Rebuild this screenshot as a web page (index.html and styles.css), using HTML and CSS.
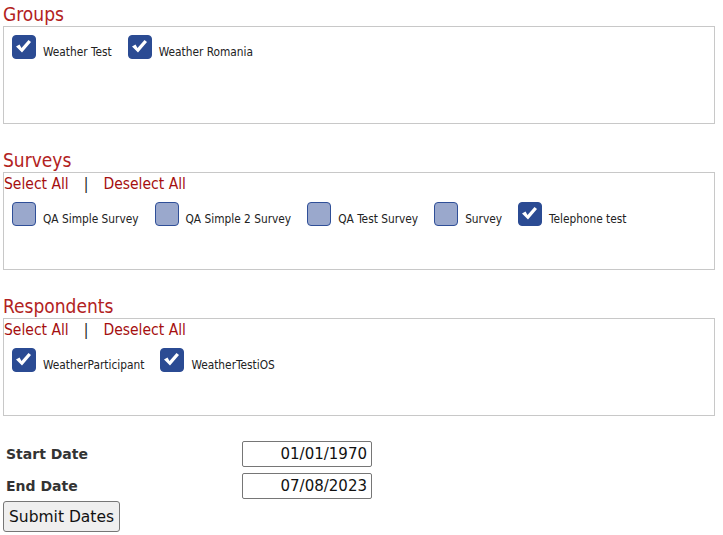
FILE: index.html
```
<!DOCTYPE html>
<html>
<head>
	<meta charset='utf-8'/>
	<title>Filters</title>
	<link rel="stylesheet" href="styles.css">
</head>
<body>

	<div id="main">

		<div class="section first">
			<h2>Groups</h2>
			<div class="box">
				<div class="items">
					<label class="item"><span class="check on"><svg viewBox="1 1 22 22"><path d="M4 11.5 L7.5 9.5 L9.5 13 L16.5 5 L19 7 L10 17.5 Z"/></svg></span><span class="name">Weather Test</span></label>
					<label class="item"><span class="check on"><svg viewBox="1 1 22 22"><path d="M4 11.5 L7.5 9.5 L9.5 13 L16.5 5 L19 7 L10 17.5 Z"/></svg></span><span class="name">Weather Romania</span></label>
				</div>
			</div>
		</div>

		<div class="section">
			<h2>Surveys</h2>
			<div class="box">
				<div class="links"><a>Select All</a><span class="sep">|</span><a>Deselect All</a></div>
				<div class="items">
					<label class="item"><span class="check"></span><span class="name">QA Simple Survey</span></label>
					<label class="item"><span class="check"></span><span class="name">QA Simple 2 Survey</span></label>
					<label class="item"><span class="check"></span><span class="name">QA Test Survey</span></label>
					<label class="item"><span class="check"></span><span class="name">Survey</span></label>
					<label class="item"><span class="check on"><svg viewBox="1 1 22 22"><path d="M4 11.5 L7.5 9.5 L9.5 13 L16.5 5 L19 7 L10 17.5 Z"/></svg></span><span class="name">Telephone test</span></label>
				</div>
			</div>
		</div>

		<div class="section">
			<h2>Respondents</h2>
			<div class="box">
				<div class="links"><a>Select All</a><span class="sep">|</span><a>Deselect All</a></div>
				<div class="items">
					<label class="item"><span class="check on"><svg viewBox="1 1 22 22"><path d="M4 11.5 L7.5 9.5 L9.5 13 L16.5 5 L19 7 L10 17.5 Z"/></svg></span><span class="name">WeatherParticipant</span></label>
					<label class="item"><span class="check on"><svg viewBox="1 1 22 22"><path d="M4 11.5 L7.5 9.5 L9.5 13 L16.5 5 L19 7 L10 17.5 Z"/></svg></span><span class="name">WeatherTestiOS</span></label>
				</div>
			</div>
		</div>

		<div id="dates">
			<div class="row">
				<b>Start Date</b>
				<input type="text" value="01/01/1970"/>
			</div>
			<div class="row">
				<b>End Date</b>
				<input type="text" value="07/08/2023"/>
			</div>
			<button id="submit">Submit Dates</button>
		</div>

	</div>

</body>
</html>
```

FILE: styles.css
```
*{
	margin:0;padding:0;
	box-sizing:border-box;
}
body{
	font-family:"DejaVu Sans Condensed","DejaVu Sans",sans-serif;
	font-stretch:condensed;
	background:white;
}
#main{
	padding:0 8px 0 3px;
}

.section{
	margin-top:24px;
}
.section.first{
	margin-top:2px;
}
.section h2{
	font-size:19px;
	font-weight:normal;
	line-height:24px;
	color:#b22222;
}
.box{
	height:98px;
	border:1px solid #c8c8c8;
}

.links{
	font-size:15.5px;
	line-height:19px;
	padding-top:2px;
	color:#a50f0f;
}
.links a{
	color:#a50f0f;
	cursor:pointer;
}
.links .sep{
	color:#222;
	margin:0 15px;
}

.items{
	display:flex;
	padding:8px 0 0 8px;
}
.item{
	display:flex;
	align-items:flex-end;
	margin-right:16px;
	cursor:pointer;
}
.item .check{
	display:block;
	width:24px;
	height:24px;
	border:1px solid #2f4f98;
	border-radius:4px;
	background:#9aa8cc;
}
.item .check.on{
	background:#2b4b93;
	border-color:#2b4b93;
}
.item .check svg{
	display:block;
	width:22px;
	height:22px;
	fill:white;
}
.item .name{
	font-size:11.8px;
	color:#222;
	margin-left:7px;
}

#dates{
	margin-top:25px;
	font-family:"DejaVu Sans",sans-serif;
	font-stretch:normal;
}
#dates .row{
	display:flex;
	align-items:center;
	margin-bottom:6px;
}
#dates b{
	width:239px;
	padding-left:3px;
	font-size:14px;
	color:#333;
}
#dates input{
	width:130px;
	height:26px;
	border:1px solid #767676;
	border-radius:2px;
	font-family:"DejaVu Sans",sans-serif;
	font-size:15px;
	text-align:right;
	padding-right:4px;
	color:#111;
}
#submit{
	margin-top:-4px;
	width:117px;
	height:31px;
	font-family:"DejaVu Sans",sans-serif;
	font-size:15.5px;
	background:#efefef;
	border:1px solid #767676;
	border-radius:3px;
	color:#111;
}
```
